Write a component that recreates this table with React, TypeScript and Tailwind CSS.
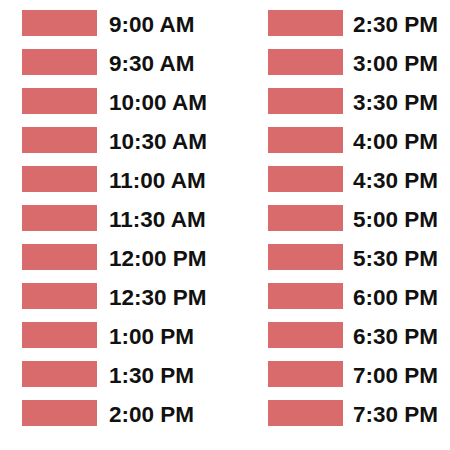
import React from 'react';

const leftTimes = ['9:00 AM', '9:30 AM', '10:00 AM', '10:30 AM', '11:00 AM', '11:30 AM', '12:00 PM', '12:30 PM', '1:00 PM', '1:30 PM', '2:00 PM'];
const rightTimes = ['2:30 PM', '3:00 PM', '3:30 PM', '4:00 PM', '4:30 PM', '5:00 PM', '5:30 PM', '6:00 PM', '6:30 PM', '7:00 PM', '7:30 PM'];

const TimeRow: React.FC<{ label: string; gap: string }> = ({ label, gap }) => (
  <div className={`flex items-start ${gap}`}>
    <div className="w-[75px] h-[26px] bg-[#d96b6c] flex-shrink-0" />
    <span className="text-[22.5px] leading-[30px] font-bold text-[#111] whitespace-nowrap">{label}</span>
  </div>
);

export default function App() {
  return (
    <div className="w-[450px] h-[450px] bg-white pl-[22px] pt-[10px] font-['Liberation_Sans',Arial,sans-serif]">
      <div className="grid grid-cols-[246px_1fr]">
        <div className="flex flex-col gap-[9px]">
          {leftTimes.map((t) => (
            <TimeRow key={t} label={t} gap="gap-[12px]" />
          ))}
        </div>
        <div className="flex flex-col gap-[9px]">
          {rightTimes.map((t) => (
            <TimeRow key={t} label={t} gap="gap-[10px]" />
          ))}
        </div>
      </div>
    </div>
  );
}
